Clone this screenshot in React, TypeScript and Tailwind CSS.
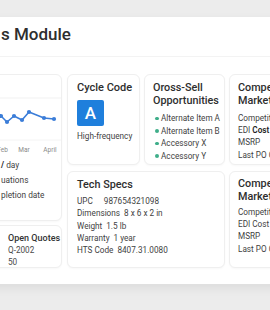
import React from "react";

const pts: [number, number][] = [
  [6, 30],
  [18, 28],
  [30, 35],
  [36, 41],
  [43, 35],
  [51, 39],
  [58, 31],
  [73, 37],
  [83, 38],
];

function Card({ className = "", children }: { className?: string; children?: React.ReactNode }) {
  return (
    <div className={`rounded-[6px] border border-[#efefef] bg-white shadow-[0_1px_2px_rgba(0,0,0,0.03)] overflow-hidden ${className}`}>
      {children}
    </div>
  );
}

export default function App() {
  const line = pts.map((p) => p.join(",")).join(" ");
  return (
    <div
      className="w-[270px] h-[310px] overflow-hidden bg-[#ececec] pt-[17px]"
      style={{ fontFamily: "Roboto, 'Liberation Sans', sans-serif" }}
    >
      <div className="ml-[-30px] w-[340px] h-[267px] bg-white shadow-[0_4px_10px_rgba(0,0,0,0.07)]">
        <div className="h-[40px] border-b border-[#f3f3f3] pl-[31px] pt-[5px]">
          <div className="text-[17px] leading-[24px] font-medium text-[#2e2e2e] whitespace-nowrap">s Module</div>
        </div>
        <div className="flex gap-[5px] pt-[17px]">
          <div className="w-[92px] flex flex-col gap-[4px] shrink-0">
            <Card className="h-[147px] pt-[6px]">
              <svg width="92" height="74" viewBox="0 0 92 74" className="block">
                <line x1="0" y1="17" x2="92" y2="17" stroke="#f1f1f1" strokeWidth="1" />
                <line x1="0" y1="59" x2="92" y2="59" stroke="#f4f4f4" strokeWidth="1" />
                <polyline points={line} fill="none" stroke="#3b7dd8" strokeWidth="1.6" strokeLinejoin="round" />
                {pts.map(([x, y], i) => (
                  <circle key={i} cx={x} cy={y} r="2.1" fill="#3b7dd8" />
                ))}
                <g fontSize="6.5" fill="#8a8a8a" textAnchor="middle" fontFamily="Roboto, sans-serif">
                  <text x="8" y="71">Jan</text>
                  <text x="31.5" y="71">Feb</text>
                  <text x="53" y="71">Mar</text>
                  <text x="79" y="71">April</text>
                </g>
              </svg>
              <div className="pl-[30px] mt-[3px] text-[8.3px] leading-[15px] text-[#3f3f3f] whitespace-nowrap">
                <div>
                  <span className="font-bold text-[#222]">/</span> day
                </div>
                <div>uations</div>
                <div>pletion date</div>
              </div>
            </Card>
            <Card className="h-[43px] pt-[6px] pl-[37px] text-[8.2px] leading-[12px] text-[#4a4a4a] whitespace-nowrap">
              <div className="text-[9px] font-medium text-[#333]">Open Quotes</div>
              <div>Q-2002</div>
              <div>50</div>
            </Card>
          </div>

          <div className="grid grid-cols-[73px_81px_80px] gap-x-[4px] gap-y-[6px]">
            <Card className="h-[91px] pt-[6px] px-[9px]">
              <div className="text-[11px] leading-[13px] font-medium text-[#2e2e2e] whitespace-nowrap">Cycle Code</div>
              <div className="mt-[6px] w-[27px] h-[26px] rounded-[2px] bg-[#1f7fdc] flex items-center justify-center text-white text-[17px] font-medium leading-none">
                A
              </div>
              <div className="mt-[4px] text-[8.2px] leading-[12px] text-[#3f3f3f] whitespace-nowrap">High-frequency</div>
            </Card>

            <Card className="h-[91px] pt-[6px] pl-[8px]">
              <div className="text-[10.8px] leading-[13px] font-medium text-[#2e2e2e] whitespace-nowrap">
                <div>Oross-Sell</div>
                <div>Opportunities</div>
              </div>
              <ul className="mt-[5px] text-[8.2px] leading-[12.5px] text-[#3f3f3f] whitespace-nowrap">
                {["Alternate Item A", "Alternate Item B", "Accessory X", "Accessory Y"].map((t) => (
                  <li key={t} className="flex items-center">
                    <span className="w-[3.5px] h-[3.5px] rounded-full bg-[#3fae8a] ml-[2px] mr-[2.5px]" />
                    {t}
                  </li>
                ))}
              </ul>
            </Card>

            <Card className="h-[91px] pt-[6px] pl-[8px]">
              <div className="text-[10.8px] leading-[13px] font-medium text-[#2e2e2e] whitespace-nowrap">
                <div>Competitor</div>
                <div>Market Pricing</div>
              </div>
              <div className="mt-[5px] text-[8.2px] leading-[12.2px] text-[#3f3f3f] whitespace-nowrap">
                <div>Competitor Price</div>
                <div>
                  EDI <span className="font-semibold text-[#222]">Cost</span>
                </div>
                <div>MSRP</div>
                <div>Last PO Cost</div>
              </div>
            </Card>

            <Card className="col-span-2 h-[97px] pt-[6px] px-[9px]">
              <div className="text-[10.8px] leading-[13px] font-medium text-[#2e2e2e]">Tech Specs</div>
              <div className="mt-[4px] text-[8.2px] leading-[12.3px] text-[#3f3f3f] whitespace-nowrap">
                <div>
                  UPC<span className="ml-[11px]">987654321098</span>
                </div>
                <div>
                  Dimensions<span className="ml-[4px]">8 x 6 x 2 in</span>
                </div>
                <div>
                  Weight<span className="ml-[4px]">1.5 lb</span>
                </div>
                <div>
                  Warranty<span className="ml-[4px]">1 year</span>
                </div>
                <div>
                  HTS Code<span className="ml-[4px]">8407.31.0080</span>
                </div>
              </div>
            </Card>

            <Card className="h-[97px] pt-[5px] pl-[8px]">
              <div className="text-[10.8px] leading-[13px] font-medium text-[#2e2e2e] whitespace-nowrap">
                <div>Competitor</div>
                <div>Market Pricing</div>
              </div>
              <div className="mt-[3px] text-[8.2px] leading-[12.2px] text-[#3f3f3f] whitespace-nowrap">
                <div>Competitor Price</div>
                <div>EDI Cost</div>
                <div>MSRP</div>
                <div>Last PO Cost</div>
              </div>
            </Card>
          </div>
        </div>
      </div>
    </div>
  );
}
